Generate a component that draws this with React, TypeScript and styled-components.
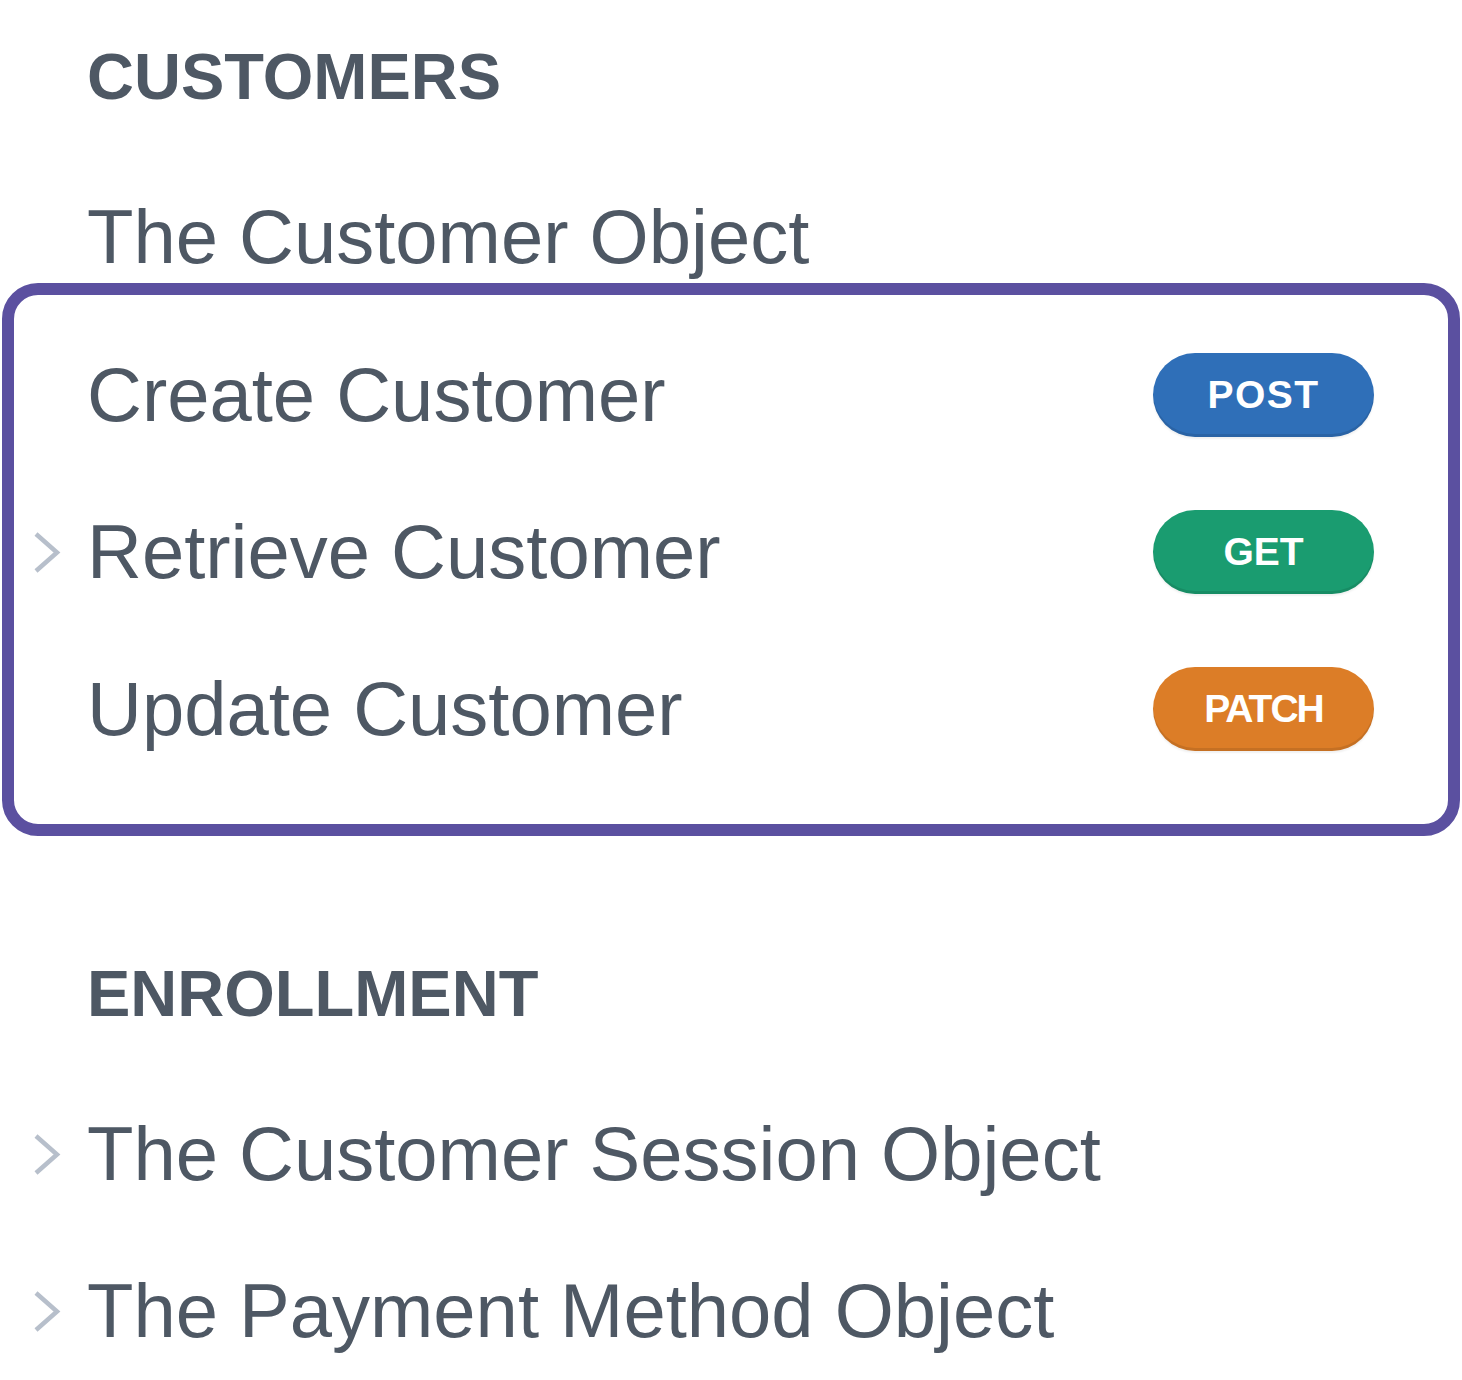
import React from 'react';
import styled, { createGlobalStyle } from 'styled-components';

type Method = 'POST' | 'GET' | 'PATCH';

interface NavItem {
  label: string;
  expandable?: boolean;
  method?: Method;
}

interface NavSection {
  title: string;
  items: NavItem[];
  highlighted?: NavItem[]; // rows drawn inside the outlined group
}

const sections: NavSection[] = [
  {
    title: 'CUSTOMERS',
    items: [{ label: 'The Customer Object' }],
    highlighted: [
      { label: 'Create Customer', method: 'POST' },
      { label: 'Retrieve Customer', method: 'GET', expandable: true },
      { label: 'Update Customer', method: 'PATCH' },
    ],
  },
  {
    title: 'ENROLLMENT',
    items: [
      { label: 'The Customer Session Object', expandable: true },
      { label: 'The Payment Method Object', expandable: true },
    ],
  },
];

const methodStyle: Record<Method, { bg: string; tracking: number }> = {
  POST: { bg: '#2f6fb8', tracking: 1.5 },
  GET: { bg: '#1a9c70', tracking: 0 },
  PATCH: { bg: '#dc7d27', tracking: -2 },
};

const GlobalStyle = createGlobalStyle`
  body {
    margin: 0;
    background: #ffffff;
    font-family: "Liberation Sans", Arial, sans-serif;
  }
`;

const Sidebar = styled.nav`
  width: 1462px;
  box-sizing: border-box;
  padding: 37px 2px 0;
  display: flex;
  flex-direction: column;
  gap: 118px;
`;

const Section = styled.section`
  display: flex;
  flex-direction: column;
`;

const Heading = styled.h2`
  margin: 0 0 74px;
  padding-left: 85px;
  font-size: 65px;
  line-height: 80px;
  font-weight: 700;
  color: #4e5864;
`;

const List = styled.div`
  display: flex;
  flex-direction: column;
  gap: 65px;
`;

const Group = styled(List)`
  border: 12px solid #5b50a0;
  border-radius: 36px;
  padding: 54px 0 69px;
`;

const Row = styled.div<{ $boxed?: boolean }>`
  display: flex;
  align-items: center;
  height: 92px;
  padding-left: ${(p) => (p.$boxed ? 18 : 30)}px;
  padding-right: 74px;
`;

const ChevronSlot = styled.span`
  flex: none;
  width: 55px;
  display: flex;
  align-items: center;
`;

const Label = styled.span`
  flex: 1;
  font-size: 76px;
  line-height: 92px;
  color: #4e5864;
  white-space: nowrap;
`;

const Badge = styled.span<{ $bg: string; $tracking: number }>`
  flex: none;
  width: 221px;
  height: 84px;
  border-radius: 42px;
  display: flex;
  align-items: center;
  justify-content: center;
  background: ${(p) => p.$bg};
  box-shadow: inset 0 -3px 0 rgba(0, 0, 0, 0.1), 0 2px 2px rgba(0, 0, 0, 0.06);
  color: #ffffff;
  font-size: 39px;
  font-weight: 700;
  letter-spacing: ${(p) => p.$tracking}px;
`;

const Chevron = () => (
  <svg width="29" height="45" viewBox="0 0 29 45" fill="none">
    <polyline points="4,4 25,22.5 4,41" stroke="#b7bfcb" strokeWidth="4.5" strokeLinejoin="miter" />
  </svg>
);

const NavRow = ({ item, boxed }: { item: NavItem; boxed?: boolean }) => (
  <Row $boxed={boxed}>
    <ChevronSlot>{item.expandable && <Chevron />}</ChevronSlot>
    <Label>{item.label}</Label>
    {item.method && (
      <Badge $bg={methodStyle[item.method].bg} $tracking={methodStyle[item.method].tracking}>
        {item.method}
      </Badge>
    )}
  </Row>
);

export default function App() {
  return (
    <>
      <GlobalStyle />
      <Sidebar>
        {sections.map((section) => (
          <Section key={section.title}>
            <Heading>{section.title}</Heading>
            <List>
              {section.items.map((item) => (
                <NavRow key={item.label} item={item} />
              ))}
            </List>
            {section.highlighted && (
              <Group>
                {section.highlighted.map((item) => (
                  <NavRow key={item.label} item={item} boxed />
                ))}
              </Group>
            )}
          </Section>
        ))}
      </Sidebar>
    </>
  );
}
